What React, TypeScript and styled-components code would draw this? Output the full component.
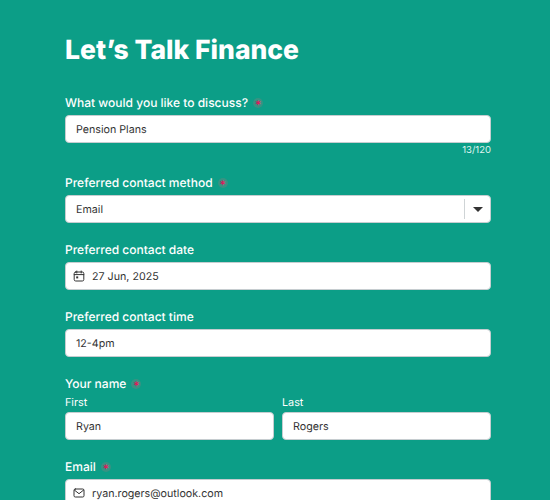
import React from "react";
import styled, { createGlobalStyle } from "styled-components";

const Global = createGlobalStyle`
  html, body { margin: 0; padding: 0; height: 500px; overflow: hidden; background: #0c9e87; }
  * { box-sizing: border-box; }
  body { font-family: Inter, "Liberation Sans", sans-serif; -webkit-font-smoothing: antialiased; text-rendering: geometricPrecision; }
`;

const Page = styled.main`
  width: 550px;
  height: 500px;
  overflow: hidden;
  padding: 32px 59px 0 65px;
  color: #fff;
`;
const Title = styled.h1`
  margin: 0 0 26px;
  font-size: 26.5px;
  line-height: 36px;
  font-weight: 800;
`;
const Field = styled.section`
  margin-bottom: 18px;
`;
const Label = styled.div`
  display: flex;
  align-items: center;
  gap: 5px;
  height: 18px;
  margin-bottom: 3px;
  font-size: 12px;
  line-height: 18px;
  font-weight: 500;
`;
const Required = styled.span`
  display: inline-flex;
  align-items: center;
  justify-content: center;
  width: 10px;
  height: 10px;
  border-radius: 50%;
  background: rgba(120, 130, 125, 0.4);
  color: #e0185c;
  font-size: 12px;
  line-height: 14px;
  padding-top: 3px;
`;
const Box = styled.div<{ $icon?: boolean }>`
  display: flex;
  align-items: center;
  height: 28px;
  padding: 0 ${(p) => (p.$icon ? "7px" : "10px")};
  gap: 7px;
  background: #fff;
  border: 1px solid #c6cdd0;
  border-radius: 4px;
  color: #333;
  font-size: 10.7px;
`;
const Value = styled.span`
  flex: 1;
`;
const Counter = styled.div`
  margin: 1px 0 -1px;
  text-align: right;
  font-size: 9.5px;
  line-height: 13px;
  color: #dff3ee;
`;
const Divider = styled.span`
  width: 1px;
  height: 20px;
  background: #cfd4d6;
  margin-right: 1px;
`;
const Caret = styled.span`
  width: 0;
  height: 0;
  margin-right: -3px;
  border-left: 5px solid transparent;
  border-right: 5px solid transparent;
  border-top: 5px solid #333;
`;
const NameGrid = styled.div`
  display: grid;
  grid-template-columns: 1fr 1fr;
  gap: 8px;
`;
const SubLabel = styled.div`
  font-size: 10.8px;
  line-height: 14px;
  margin-bottom: 2px;
`;
const Icon = styled.svg`
  width: 12px;
  height: 12px;
  flex: none;
  fill: none;
  stroke: #333;
  stroke-width: 1;
  stroke-linecap: round;
  stroke-linejoin: round;
`;

const CalendarIcon = () => (
  <Icon viewBox="0 0 12 12">
    <rect x="1.2" y="2" width="9.6" height="9" rx="1.5" />
    <path d="M1.2 4.6h9.6M3.8 1v2M8.2 1v2" />
    <rect x="3.2" y="6.4" width="2" height="2" fill="#333" stroke="none" />
  </Icon>
);
const MailIcon = () => (
  <Icon viewBox="0 0 12 12">
    <rect x="1" y="2" width="10" height="8" rx="1.3" />
    <path d="M1.3 3l4.7 3.7L10.7 3" />
  </Icon>
);

export default function App() {
  return (
    <Page>
      <Global />
      <Title>Let’s Talk Finance</Title>
      <Field>
        <Label>What would you like to discuss?<Required>*</Required></Label>
        <Box><Value>Pension Plans</Value></Box>
        <Counter>13/120</Counter>
      </Field>
      <Field>
        <Label>Preferred contact method<Required>*</Required></Label>
        <Box><Value>Email</Value><Divider /><Caret /></Box>
      </Field>
      <Field>
        <Label>Preferred contact date</Label>
        <Box $icon><CalendarIcon /><Value>27 Jun, 2025</Value></Box>
      </Field>
      <Field>
        <Label>Preferred contact time</Label>
        <Box><Value>12-4pm</Value></Box>
      </Field>
      <Field>
        <Label>Your name<Required>*</Required></Label>
        <NameGrid>
          <div><SubLabel>First</SubLabel><Box><Value>Ryan</Value></Box></div>
          <div><SubLabel>Last</SubLabel><Box><Value>Rogers</Value></Box></div>
        </NameGrid>
      </Field>
      <Field>
        <Label>Email<Required>*</Required></Label>
        <Box $icon><MailIcon /><Value>ryan.rogers@outlook.com</Value></Box>
      </Field>
    </Page>
  );
}
